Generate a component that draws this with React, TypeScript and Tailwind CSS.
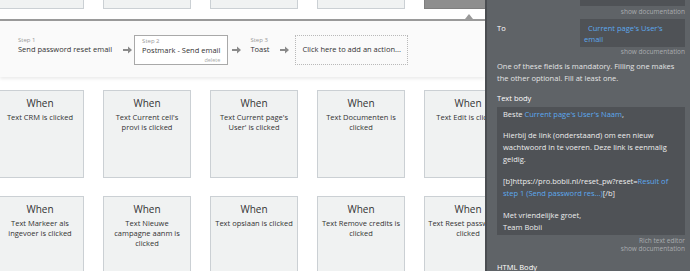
import React from 'react';

const rowOne = [
  "Text CRM is clicked",
  "Text Current cell's provi is clicked",
  "Text Current page's User' is clicked",
  "Text Documenten is clicked",
  "Text Edit is clicked",
];

const rowTwo = [
  "Text Markeer als ingevoer is clicked",
  "Text Nieuwe campagne aanm is clicked",
  "Text opslaan is clicked",
  "Text Remove credits is clicked",
  "Text Reset password is clicked",
];

const Arrow: React.FC<{ className?: string }> = ({ className = '' }) => (
  <svg width="9" height="8" viewBox="0 0 9 8" className={`shrink-0 ${className}`}>
    <path d="M0 3h5V0.5L9 4 5 7.5V5H0z" fill="#8a8a8a" />
  </svg>
);

const EventCard: React.FC<{ text: string }> = ({ text }) => (
  <div className="w-[88px] h-[88px] shrink-0 bg-[#f0f2f2] border border-[#cbd0d4] pt-[6px] px-[3px] text-center text-[#333]">
    <div className="text-[10px] leading-[13px] mb-[2px]">When</div>
    <div className="text-[7.5px] leading-[10px]">{text}</div>
  </div>
);

const Step: React.FC<{ label: string; title: string; boxed?: boolean }> = ({ label, title, boxed }) => (
  <div className={`relative h-[30px] px-[7px] pt-[1px] ${boxed ? 'border border-[#a9a9a9] bg-white' : ''}`}>
    <div className="text-[6px] leading-[8px] text-[#999]">{label}</div>
    <div className="text-[7.5px] leading-[10px] text-[#333] whitespace-nowrap">{title}</div>
    {boxed && (
      <div className="absolute right-[7px] bottom-[1px] text-[5.5px] leading-[6px] text-[#aaa]">delete</div>
    )}
  </div>
);

const Doc: React.FC<{ children?: React.ReactNode }> = ({ children }) => (
  <div className="text-right text-[6.5px] leading-[8px] text-[#a9acaf]">{children ?? 'show documentation'}</div>
);

const Blue: React.FC<{ children: React.ReactNode }> = ({ children }) => (
  <span className="text-[#5ca8ee]">{children}</span>
);

export default function App() {
  return (
    <div className="flex w-[690px] h-[271px] overflow-hidden bg-white" style={{ fontFamily: '"Open Sans", sans-serif' }}>
      <div className="w-[485px] shrink-0 overflow-hidden">
        {/* previous row, cut off at the top */}
        <div className="flex items-end gap-[19px] ml-[-4px] h-[9px] overflow-hidden">
          {[0, 1, 2, 3].map((i) => (
            <div key={i} className="w-[88px] h-[88px] shrink-0 bg-[#f0f2f2] border border-[#cbd0d4]" />
          ))}
          <div className="w-[88px] h-[88px] shrink-0 bg-[#8e8e8e] border border-[#7f7f7f]" />
        </div>
        <div className="relative h-[10px]">
          <div className="absolute left-[465px] top-[5px] w-0 h-0 border-l-[4px] border-r-[4px] border-b-[5px] border-l-transparent border-r-transparent border-b-[#9a9a9a]" />
        </div>
        <div className="h-[2px] bg-[#9a9a9a]" />

        {/* workflow steps */}
        <div className="h-[56px] bg-[#fafafa] shadow-[0_2px_3px_rgba(0,0,0,0.08)] flex items-center pl-[11px] pt-[2px]">
          <Step label="Step 1" title="Send password reset email" />
          <Arrow className="ml-[4px] mr-[2px]" />
          <Step label="Step 2" title="Postmark - Send email" boxed />
          <Arrow className="ml-[4px] mr-[2px]" />
          <Step label="Step 3" title="Toast" />
          <Arrow className="ml-[4px] mr-[6px]" />
          <div className="h-[30px] w-[113px] border border-dotted border-[#b9b9b9] flex items-center px-[6px] text-[7.5px] text-[#333] whitespace-nowrap">
            Click here to add an action...
          </div>
        </div>

        <div className="flex gap-[19px] ml-[-4px] mt-[13px]">
          {rowOne.map((t) => (
            <EventCard key={t} text={t} />
          ))}
        </div>
        <div className="flex gap-[19px] ml-[-4px] mt-[18px]">
          {rowTwo.map((t) => (
            <EventCard key={t} text={t} />
          ))}
        </div>
      </div>

      {/* property editor */}
      <div className="flex-1 bg-[#5f6367] border-l-2 border-[#4a4d51] pl-[10px] pr-[5px] text-[#e6e7e8]">
        <div className="ml-auto w-[105px] h-[6px] bg-[#4f5256]" />
        <div className="mt-[2px]">
          <Doc />
        </div>

        <div className="flex mt-[3px]">
          <div className="w-[83px] pt-[4px] text-[7.5px] leading-[11px] text-white">To</div>
          <div className="flex-1 h-[28px] bg-[#4f5256] pl-[4px] pr-[12px] pt-[4px] indent-[4px] text-[7.5px] leading-[11px] text-[#5ca8ee]">
            Current page's User's email
          </div>
        </div>
        <div className="mt-[1px]">
          <Doc />
        </div>

        <div className="mt-[4px] text-[7.5px] leading-[12px] text-[#e3e4e5]">
          One of these fields is mandatory. Filling one makes the other optional. Fill at least one.
        </div>

        <div className="mt-[8px] text-[7.5px] leading-[12px] text-white">Text body</div>
        <div className="mt-[3px] h-[128px] bg-[#4f5256] pl-[6px] pr-[4px] pt-[1px] text-[7.5px] leading-[12px] text-[#eeeeee]">
          <div>
            Beste <Blue>Current page's User's Naam</Blue>,
          </div>
          <div className="h-[9px]" />
          <div>Hierbij de link (onderstaand) om een nieuw wachtwoord in te voeren. Deze link is eenmalig geldig.</div>
          <div className="h-[10px]" />
          <div>
            [b]https://pro.bobii.nl/reset_pw?reset=<Blue>Result of step 1 (Send password res...)</Blue>[/b]
          </div>
          <div className="h-[10px]" />
          <div>Met vriendelijke groet,</div>
          <div>Team Bobii</div>
        </div>
        <div className="mt-[2px]">
          <Doc>Rich text editor</Doc>
          <Doc />
        </div>
        <div className="mt-[8px] text-[7.5px] leading-[12px] text-white">HTML Body</div>
      </div>
    </div>
  );
}
